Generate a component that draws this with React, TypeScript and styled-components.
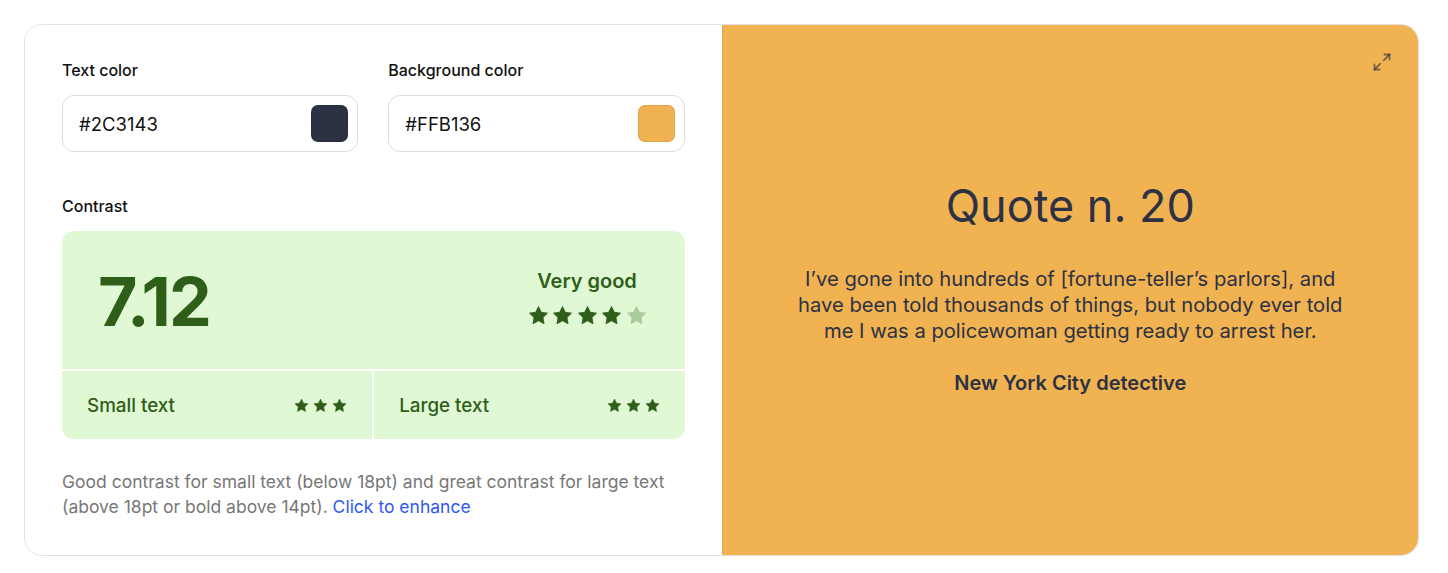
import React from 'react';
import styled, { createGlobalStyle } from 'styled-components';

const TEXT_COLOR = '#2C3143';
const BG_COLOR = '#F1B252';
const GREEN_DARK = '#2F5E1A';
const GREEN_BG = '#E0F8D4';

const GlobalStyle = createGlobalStyle`
	html, body {
		margin: 0;
		padding: 0;
		background: #ffffff;
	}
	body {
		font-family: Inter, 'Noto Sans', sans-serif;
		-webkit-font-smoothing: antialiased;
	}
	* {
		box-sizing: border-box;
	}
`;

const Page = styled.div`
	padding: 24px 29px 17px 24px;
`;

const Card = styled.div`
	display: grid;
	grid-template-columns: 1fr 1fr;
	height: 532px;
	border: 1px solid #e2e2e2;
	border-radius: 18px;
	overflow: hidden;
`;

const SettingsPanel = styled.div`
	display: flex;
	flex-direction: column;
	padding: 35px 37px 0 37px;
	background: #ffffff;
`;

const FieldsRow = styled.div`
	display: grid;
	grid-template-columns: 1fr 1fr;
	gap: 30px;
`;

const Field = styled.div`
	display: flex;
	flex-direction: column;
`;

const Label = styled.div`
	font-size: 16px;
	line-height: 20px;
	font-weight: 500;
	color: #111111;
	margin-bottom: 15px;
`;

const InputBox = styled.div`
	display: flex;
	align-items: center;
	justify-content: space-between;
	height: 57px;
	padding: 0 9px 0 16px;
	border: 1.5px solid #dcdcdc;
	border-radius: 12px;
	font-size: 18.5px;
	color: #111111;
`;

const Swatch = styled.div<{ $color: string }>`
	width: 37px;
	height: 37px;
	border-radius: 7px;
	background: ${({ $color }) => $color};
	border: 1px solid rgba(0, 0, 0, 0.08);
`;

const ContrastSection = styled.div`
	margin-top: 44px;
	display: flex;
	flex-direction: column;
`;

const ContrastLabel = styled(Label)`
	margin-bottom: 15px;
`;

const ScoreGrid = styled.div`
	display: grid;
	grid-template-columns: 1fr 1fr;
	grid-template-rows: 138px 68px;
	gap: 2px;
	border-radius: 12px;
	overflow: hidden;
	color: ${GREEN_DARK};
`;

const ScoreMain = styled.div`
	grid-column: 1 / span 2;
	display: flex;
	align-items: center;
	justify-content: space-between;
	padding: 0 38px 0 36px;
	background: ${GREEN_BG};
`;

const Ratio = styled.div`
	font-size: 68px;
	font-weight: 700;
	letter-spacing: -2px;
	line-height: 1;
	margin-top: 2px;
`;

const Verdict = styled.div`
	display: flex;
	flex-direction: column;
	align-items: center;
	gap: 12px;
	margin-top: -5px;
`;

const VerdictText = styled.div`
	font-size: 20px;
	font-weight: 600;
	line-height: 24px;
`;

const Stars = styled.div<{ $gap: number }>`
	display: flex;
	gap: ${({ $gap }) => $gap}px;
`;

const ScoreCell = styled.div`
	display: flex;
	align-items: center;
	justify-content: space-between;
	padding: 0 25px;
	background: ${GREEN_BG};
	font-size: 18.8px;
	font-weight: 500;
`;

const Note = styled.p`
	margin: 30px 0 0;
	font-size: 17.5px;
	line-height: 25px;
	color: #777777;
`;

const EnhanceLink = styled.a`
	color: #3158f0;
	text-decoration: none;
	cursor: pointer;
`;

const PreviewPanel = styled.div`
	position: relative;
	display: flex;
	flex-direction: column;
	align-items: center;
	justify-content: center;
	padding: 0 40px 4px;
	background: ${BG_COLOR};
	border-left: 1px solid rgba(0, 0, 0, 0.06);
	color: ${TEXT_COLOR};
	text-align: center;
`;

const ExpandButton = styled.button`
	position: absolute;
	top: 27px;
	right: 26px;
	display: flex;
	padding: 0;
	border: none;
	background: none;
	color: rgba(44, 49, 67, 0.6);
	cursor: pointer;
`;

const QuoteTitle = styled.h2`
	margin: 0 0 34px;
	font-size: 45px;
	font-weight: 400;
	line-height: 52px;
`;

const QuoteBody = styled.p`
	margin: 0 0 26px;
	max-width: 560px;
	font-size: 20.2px;
	line-height: 26px;
`;

const QuoteAuthor = styled.div`
	font-size: 20px;
	font-weight: 600;
	line-height: 26px;
`;

const Star: React.FC<{ size: number; dim?: boolean }> = ({ size, dim }) => (
	<svg width={size} height={size} viewBox="0 0 24 24">
		<path
			d="M12 1.8l3.2 6.5 7.1 1-5.2 5 1.2 7.1L12 18l-6.3 3.4 1.2-7.1-5.2-5 7.1-1z"
			fill={dim ? '#A9CC9C' : GREEN_DARK}
			stroke={dim ? '#A9CC9C' : GREEN_DARK}
			strokeWidth="1"
			strokeLinejoin="round"
		/>
	</svg>
);

const StarRow: React.FC<{ count: number; filled: number; size: number; gap: number }> = ({
	count,
	filled,
	size,
	gap
}) => (
	<Stars $gap={gap}>
		{Array.from({ length: count }).map((_, i) => (
			<Star key={i} size={size} dim={i >= filled} />
		))}
	</Stars>
);

const ExpandIcon: React.FC = () => (
	<svg
		width="20"
		height="20"
		viewBox="0 0 24 24"
		fill="none"
		stroke="currentColor"
		strokeWidth="2.2"
		strokeLinecap="round"
		strokeLinejoin="round"
	>
		<polyline points="15 3 21 3 21 9" />
		<polyline points="9 21 3 21 3 15" />
		<line x1="21" y1="3" x2="14" y2="10" />
		<line x1="3" y1="21" x2="10" y2="14" />
	</svg>
);

const App: React.FC = () => (
	<>
		<GlobalStyle />
		<Page>
			<Card>
				<SettingsPanel>
					<FieldsRow>
						<Field>
							<Label>Text color</Label>
							<InputBox>
								#2C3143
								<Swatch $color={TEXT_COLOR} />
							</InputBox>
						</Field>
						<Field>
							<Label>Background color</Label>
							<InputBox>
								#FFB136
								<Swatch $color={BG_COLOR} />
							</InputBox>
						</Field>
					</FieldsRow>

					<ContrastSection>
						<ContrastLabel>Contrast</ContrastLabel>
						<ScoreGrid>
							<ScoreMain>
								<Ratio>7.12</Ratio>
								<Verdict>
									<VerdictText>Very good</VerdictText>
									<StarRow count={5} filled={4} size={21} gap={3.5} />
								</Verdict>
							</ScoreMain>
							<ScoreCell>
								Small text
								<StarRow count={3} filled={3} size={15} gap={4} />
							</ScoreCell>
							<ScoreCell>
								Large text
								<StarRow count={3} filled={3} size={15} gap={4} />
							</ScoreCell>
						</ScoreGrid>
					</ContrastSection>

					<Note>
						Good contrast for small text (below 18pt) and great contrast for large text (above
						18pt or bold above 14pt). <EnhanceLink>Click to enhance</EnhanceLink>
					</Note>
				</SettingsPanel>

				<PreviewPanel>
					<ExpandButton aria-label="Expand">
						<ExpandIcon />
					</ExpandButton>
					<QuoteTitle>Quote n. 20</QuoteTitle>
					<QuoteBody>
						I’ve gone into hundreds of [fortune-teller’s parlors], and have been told thousands of
						things, but nobody ever told me I was a policewoman getting ready to arrest her.
					</QuoteBody>
					<QuoteAuthor>New York City detective</QuoteAuthor>
				</PreviewPanel>
			</Card>
		</Page>
	</>
);

export default App;
